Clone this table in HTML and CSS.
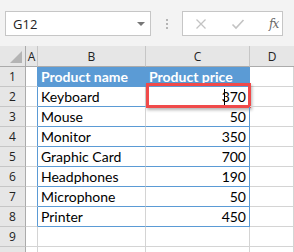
FILE: index.html
```html
<!DOCTYPE html>
<html>
<head>
<meta charset="utf-8">
<link rel="stylesheet" href="styles.css">
</head>
<body>
<div class="sheet">
  <div class="toolbar">
    <div class="namebox">
      <span class="ref">G12</span>
      <span class="caret"></span>
    </div>
    <div class="grip"><i></i><i></i><i></i></div>
    <div class="formula">
      <svg class="ico" width="12" height="12" viewBox="0 0 12 12"><path d="M1.5 1.5 L10.5 10.5 M10.5 1.5 L1.5 10.5" stroke="#c3c3c3" stroke-width="1.3" fill="none"/></svg>
      <svg class="ico" width="14" height="12" viewBox="0 0 14 12"><path d="M1.5 6.5 L5 10 L12.5 2" stroke="#c3c3c3" stroke-width="1.6" fill="none"/></svg>
      <span class="fx">fx</span>
    </div>
  </div>

  <div class="grid">
    <div class="corner"><span class="tri"></span></div>
    <div class="colhead">A</div>
    <div class="colhead">B</div>
    <div class="colhead">C</div>
    <div class="colhead last">D</div>

    <div class="rowhead">1</div><div class="cell a edge"></div><div class="cell th">Product name</div><div class="cell th">Product price</div><div class="cell"></div>
    <div class="rowhead">2</div><div class="cell a edge"></div><div class="cell td">Keyboard</div><div class="cell td num sel"><span class="val"><span class="beam"></span>370</span><span class="pick"></span></div><div class="cell"></div>
    <div class="rowhead">3</div><div class="cell a edge"></div><div class="cell td">Mouse</div><div class="cell td num">50</div><div class="cell"></div>
    <div class="rowhead">4</div><div class="cell a edge"></div><div class="cell td">Monitor</div><div class="cell td num">350</div><div class="cell"></div>
    <div class="rowhead">5</div><div class="cell a edge"></div><div class="cell td">Graphic Card</div><div class="cell td num">700</div><div class="cell"></div>
    <div class="rowhead">6</div><div class="cell a edge"></div><div class="cell td">Headphones</div><div class="cell td num">190</div><div class="cell"></div>
    <div class="rowhead">7</div><div class="cell a edge"></div><div class="cell td">Microphone</div><div class="cell td num">50</div><div class="cell"></div>
    <div class="rowhead">8</div><div class="cell a edge"></div><div class="cell td">Printer</div><div class="cell td num">450</div><div class="cell"></div>
    <div class="rowhead">9</div><div class="cell a"></div><div class="cell"></div><div class="cell"></div><div class="cell"></div>
    <div class="rowhead"></div><div class="cell a"></div><div class="cell"></div><div class="cell"></div><div class="cell"></div>
  </div>
</div>
</body>
</html>
```

FILE: styles.css
```css
* { box-sizing: border-box; }

html, body {
  margin: 0;
  padding: 0;
  background: #ffffff;
}

.sheet {
  width: 294px;
  height: 252px;
  overflow: hidden;
  font-family: "Open Sans", "Noto Sans", sans-serif;
}

/* name box + formula bar */
.toolbar {
  height: 46px;
  background: #f3f3f3;
  display: flex;
  align-items: flex-start;
  padding: 11px 0 0 5px;
}

.namebox {
  width: 146px;
  height: 25px;
  background: #fff;
  border: 1px solid #c6c6c6;
  display: flex;
  align-items: center;
  justify-content: space-between;
  padding: 0 5px 0 7px;
}

.ref {
  font-size: 13px;
  color: #222;
}

.caret {
  width: 0;
  height: 0;
  border-left: 4px solid transparent;
  border-right: 4px solid transparent;
  border-top: 4px solid #777;
}

.grip {
  width: 31px;
  height: 25px;
  display: flex;
  flex-direction: column;
  align-items: center;
  justify-content: center;
  gap: 2px;
}

.grip i {
  width: 2px;
  height: 2px;
  background: #b5b5b5;
}

.formula {
  width: 101px;
  height: 25px;
  background: #fff;
  border: 1px solid #c6c6c6;
  display: flex;
  align-items: center;
  padding: 0 0 0 12px;
  gap: 24px;
}

.fx {
  font-family: "DejaVu Serif", "Liberation Serif", serif;
  font-style: italic;
  font-size: 12px;
  color: #6a6a6a;
  letter-spacing: -1px;
}

/* worksheet grid */
.grid {
  display: grid;
  grid-template-columns: 26px 12px 108px 104px 44px;
  grid-template-rows: 21px repeat(10, 20px);
  font-family: "Lato", "Open Sans", sans-serif;
}

.corner,
.colhead,
.rowhead {
  background: #e6e6e6;
  border-right: 1px solid #ababab;
  border-bottom: 1px solid #ababab;
  color: #222;
  font-family: "Open Sans", "Noto Sans", sans-serif;
  font-size: 12px;
}

.colhead {
  display: flex;
  align-items: center;
  justify-content: center;
  border-right-color: #c6c6c6;
  padding-top: 1px;
}

.colhead.last { border-right: none; }

.corner {
  position: relative;
}

.tri {
  position: absolute;
  right: 3px;
  bottom: 3px;
  width: 0;
  height: 0;
  border-left: 12px solid transparent;
  border-bottom: 12px solid #b4b4b4;
}

.rowhead {
  display: flex;
  align-items: center;
  justify-content: center;
  border-bottom-color: #c6c6c6;
}

.cell {
  border-right: 1px solid #d4d4d4;
  border-bottom: 1px solid #d4d4d4;
  font-size: 14px;
  color: #000;
  display: flex;
  align-items: center;
  white-space: nowrap;
  position: relative;
}

/* table's left edge sits on column A's right line */
.cell.edge { border-right-color: #5b9bd5; }

.th {
  background: #5b9bd5;
  color: #fff;
  font-weight: bold;
  padding-left: 3px;
  border-right-color: #5b9bd5;
  border-bottom-color: #5b9bd5;
}

.td {
  padding-left: 3px;
  border-bottom-color: #5b9bd5;
}

.num {
  justify-content: flex-end;
  padding-right: 3px;
  border-right-color: #5b9bd5;
}

.val {
  position: relative;
}

/* text cursor resting on the value */
.beam {
  position: absolute;
  left: 2px;
  top: 1px;
  width: 1px;
  height: 16px;
  background: #000;
}

/* highlight frame around the active value */
.pick {
  position: absolute;
  left: 0;
  top: -4px;
  width: 105px;
  height: 25px;
  border: 3px solid #f04a4a;
  box-shadow: 1px 2px 3px rgba(0, 0, 0, 0.3);
}
```
